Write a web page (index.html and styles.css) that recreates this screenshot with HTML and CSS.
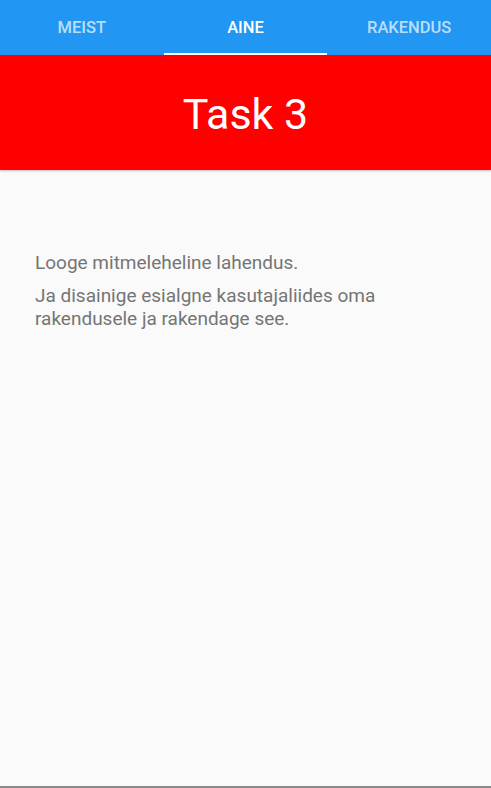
FILE: index.html
```html
<!DOCTYPE html>
<html>
<head>
<meta charset="utf-8">
<link rel="stylesheet" href="styles.css">
</head>
<body>
<div class="app">
  <nav class="tabs">
    <div class="tab">MEIST</div>
    <div class="tab active">AINE</div>
    <div class="tab">RAKENDUS</div>
  </nav>
  <header class="banner">Task 3</header>
  <main class="content">
    <p>Looge mitmeleheline lahendus.</p>
    <p>Ja disainige esialgne kasutajaliides oma rakendusele ja rakendage see.</p>
  </main>
</div>
</body>
</html>
```
FILE: styles.css
```css
html, body {
  margin: 0;
  padding: 0;
  height: 100%;
}
body {
  font-family: Roboto, "Noto Sans", sans-serif;
  background: #fafafa;
}
.app {
  height: 786px;
  display: flex;
  flex-direction: column;
  border-bottom: 2px solid #8a8a8a;
}
.tabs {
  display: flex;
  height: 55px;
  background: #2196f3;
}
.tab {
  flex: 1;
  display: flex;
  align-items: center;
  justify-content: center;
  font-size: 16.5px;
  font-weight: 500;
  color: rgba(255,255,255,0.7);
  box-sizing: border-box;
  border-bottom: 2px solid transparent;
  padding-top: 2px;
}
.tab.active {
  color: #fff;
  border-bottom-color: #fff;
}
.banner {
  height: 115px;
  background: #ff0000;
  color: #fff;
  font-size: 43px;
  display: flex;
  align-items: center;
  justify-content: center;
  padding-top: 2px;
  box-sizing: border-box;
  box-shadow: 0 1px 2px rgba(0,0,0,0.25);
  position: relative;
}
.content {
  flex: 1;
  padding: 81px 35px 0 35px;
  color: #757575;
  font-size: 19px;
  line-height: 23px;
}
.content p {
  margin: 0 0 10px 0;
}
```
